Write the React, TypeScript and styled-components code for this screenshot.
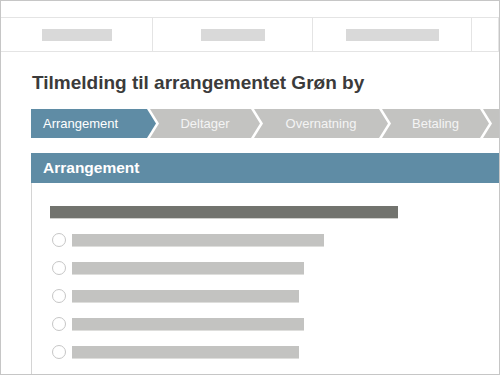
import styled, { createGlobalStyle } from "styled-components";

const GlobalStyle = createGlobalStyle`
  html, body {
    margin: 0;
    padding: 0;
    background: #ffffff;
  }
  body {
    font-family: "Liberation Sans", Arial, sans-serif;
  }
`;

const navCells = [
  { width: 152, bar: 70 },
  { width: 160, bar: 64 },
  { width: 159, bar: 93 },
  { width: 27, bar: 0 },
];

const steps = [
  { label: "Arrangement", width: 125, active: true },
  { label: "Deltager", width: 110 },
  { label: "Overnatning", width: 134 },
  { label: "Betaling", width: 107 },
  { label: "", width: 40 },
];

const options = [252, 232, 227, 232, 227];

const ARROW = 9;
const GAP = 3;

const App = () => {
  return (
    <>
      <GlobalStyle />
      <Frame>
        <TopStrip />
        <Nav>
          {navCells.map((cell, i) => (
            <NavCell key={i} $width={cell.width}>
              {cell.bar > 0 && <Placeholder style={{ width: cell.bar }} />}
            </NavCell>
          ))}
        </Nav>
        <Content>
          <Title>Tilmelding til arrangementet Grøn by</Title>
          <Steps>
            {steps.map((step, i) => (
              <Step
                key={i}
                $width={step.width}
                $active={!!step.active}
                $first={i === 0}
              >
                {step.label}
              </Step>
            ))}
          </Steps>
          <Panel>
            <PanelHeader>Arrangement</PanelHeader>
            <PanelBody>
              <Question />
              <OptionList>
                {options.map((w, i) => (
                  <OptionRow key={i}>
                    <Radio />
                    <OptionBar style={{ width: w }} />
                  </OptionRow>
                ))}
              </OptionList>
            </PanelBody>
          </Panel>
        </Content>
      </Frame>
    </>
  );
};

const Frame = styled.div`
  width: 500px;
  height: 375px;
  box-sizing: border-box;
  border: 1px solid #c6c6c6;
  overflow: hidden;
  display: flex;
  flex-direction: column;
  background: #ffffff;
`;

const TopStrip = styled.div`
  height: 16px;
`;

const Nav = styled.div`
  display: flex;
  height: 33px;
  border-top: 1px solid #e4e4e4;
  border-bottom: 1px solid #e4e4e4;
`;

const NavCell = styled.div<{ $width: number }>`
  width: ${(p) => p.$width}px;
  flex-shrink: 0;
  box-sizing: border-box;
  border-right: 1px solid #e4e4e4;
  display: flex;
  align-items: center;
  justify-content: center;
`;

const Placeholder = styled.div`
  height: 12px;
  background: #d9d9d9;
`;

const Content = styled.div`
  flex: 1;
  display: flex;
  flex-direction: column;
  padding-left: 30px;
`;

const Title = styled.h1`
  margin: 20px 0 0 1px;
  font-size: 19px;
  font-weight: bold;
  color: #3b3b3b;
  line-height: 22px;
`;

const Steps = styled.div`
  display: flex;
  height: 29px;
  margin-top: 15px;
  overflow: hidden;
`;

const Step = styled.div<{ $width: number; $active: boolean; $first: boolean }>`
  width: ${(p) => p.$width}px;
  flex-shrink: 0;
  box-sizing: border-box;
  margin-left: ${(p) => (p.$first ? 0 : -(ARROW - GAP))}px;
  padding-left: ${(p) => (p.$first ? 12 : ARROW)}px;
  padding-right: ${ARROW}px;
  display: flex;
  align-items: center;
  justify-content: ${(p) => (p.$first ? "flex-start" : "center")};
  background: ${(p) => (p.$active ? "#5f8ca5" : "#c3c3c1")};
  color: ${(p) => (p.$active ? "#ffffff" : "#f4f4f4")};
  font-size: 13px;
  white-space: nowrap;
  clip-path: ${(p) =>
    p.$first
      ? `polygon(0 0, calc(100% - ${ARROW}px) 0, 100% 50%, calc(100% - ${ARROW}px) 100%, 0 100%)`
      : `polygon(0 0, calc(100% - ${ARROW}px) 0, 100% 50%, calc(100% - ${ARROW}px) 100%, 0 100%, ${ARROW}px 50%)`};
`;

const Panel = styled.div`
  margin-top: 15px;
  flex: 1;
  display: flex;
  flex-direction: column;
`;

const PanelHeader = styled.div`
  height: 30px;
  background: #5f8ca5;
  color: #ffffff;
  font-size: 15.5px;
  font-weight: bold;
  display: flex;
  align-items: center;
  padding-left: 12px;
`;

const PanelBody = styled.div`
  flex: 1;
  border-left: 1px solid #d4d4d4;
  padding: 23px 0 0 18px;
`;

const Question = styled.div`
  width: 348px;
  height: 12px;
  background: #72736e;
  box-shadow: 0 1px 0 #cfcfcc;
`;

const OptionList = styled.div`
  margin-top: 8px;
  display: flex;
  flex-direction: column;
`;

const OptionRow = styled.div`
  height: 28px;
  display: flex;
  align-items: center;
  gap: 6px;
  padding-left: 2px;
`;

const Radio = styled.div`
  width: 14px;
  height: 14px;
  box-sizing: border-box;
  border-radius: 50%;
  border: 1.5px solid #c6c6c6;
  flex-shrink: 0;
`;

const OptionBar = styled.div`
  height: 12px;
  background: #c3c3c1;
  box-shadow: 0 1px 0 #dededc;
`;

export default App;
